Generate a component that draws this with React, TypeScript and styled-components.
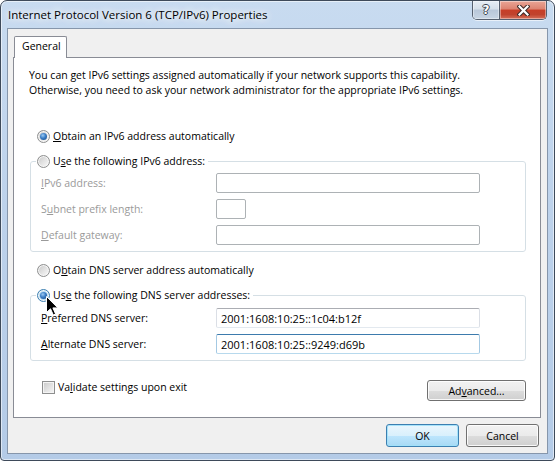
import React from 'react';
import styled, { createGlobalStyle, css } from 'styled-components';

const GlobalStyle = createGlobalStyle`
  html, body {
    margin: 0;
    padding: 0;
    background: #fff;
  }
  body {
    font-family: "Open Sans", "Noto Sans", sans-serif;
    font-size: 10.5px;
    color: #000;
  }
  * {
    box-sizing: border-box;
  }
`;

const Window = styled.div`
  position: relative;
  width: 555px;
  height: 461px;
  display: flex;
  flex-direction: column;
  padding: 0 6px 6px 6px;
  border: 1px solid #3e4a5a;
  border-radius: 7px 7px 4px 4px;
  background: linear-gradient(180deg, #c8dbf0 0%, #bdd2eb 45%, #b4cbe7 100%);
  box-shadow: inset 0 0 0 1px rgba(255, 255, 255, 0.55);
  overflow: hidden;
`;

const TitleBar = styled.div`
  height: 27px;
  flex-shrink: 0;
  display: flex;
  align-items: flex-start;
`;

const Title = styled.div`
  padding: 6px 0 0 1px;
  font-size: 11.5px;
  line-height: 15px;
  text-shadow: 0 0 6px #fff, 0 0 10px #fff, 0 0 14px rgba(255, 255, 255, 0.8);
`;

const Captions = styled.div`
  margin-left: auto;
  margin-right: 1px;
  display: flex;
  height: 19px;
  border: 1px solid #56606f;
  border-top: none;
  border-radius: 0 0 5px 5px;
  overflow: hidden;
  box-shadow: 0 1px 0 rgba(255, 255, 255, 0.6);
`;

const CaptionButton = styled.div<{ $kind: 'help' | 'close' }>`
  display: flex;
  align-items: center;
  justify-content: center;
  width: ${p => (p.$kind === 'help' ? 27 : 46)}px;
  box-shadow: inset 0 0 0 1px rgba(255, 255, 255, 0.4);
  ${p =>
    p.$kind === 'help'
      ? css`
          border-right: 1px solid #56606f;
          background: linear-gradient(180deg, #e6edf5 0%, #d5dfea 45%, #b8c7d9 50%, #c8d5e4 100%);
        `
      : css`
          background: linear-gradient(180deg, #e9a596 0%, #dc8270 45%, #c73e27 50%, #c0432d 75%, #d6705a 100%);
        `}
`;

const HelpGlyph = styled.span`
  font-family: "DejaVu Sans", sans-serif;
  font-weight: bold;
  font-size: 12px;
  line-height: 1;
  color: #fff;
  text-shadow: 1px 0 #3b4450, -1px 0 #3b4450, 0 1px #3b4450, 0 -1px #3b4450;
`;

const Client = styled.div`
  flex: 1;
  display: flex;
  flex-direction: column;
  background: #f0f0f0;
  border: 1px solid #8696ab;
  padding: 7px 6px 6px 5px;
`;

const TabStrip = styled.div`
  display: flex;
  padding-left: 1px;
  position: relative;
  z-index: 1;
`;

const Tab = styled.div`
  width: 53px;
  height: 22px;
  margin-bottom: -1px;
  padding: 2px 0 0 7px;
  line-height: 15px;
  background: #fff;
  border: 1px solid #898c95;
  border-bottom: none;
  border-radius: 2px 2px 0 0;
`;

const Panel = styled.div`
  flex: 1;
  display: flex;
  flex-direction: column;
  background: #fff;
  border: 1px solid #898c95;
  padding: 10px 14px 0 16px;
`;

const Intro = styled.p`
  margin: 0 0 0 -1px;
  line-height: 15px;
`;

const Line = styled.span`
  display: block;
  white-space: nowrap;
`;

const OptionRow = styled.label<{ $top: number }>`
  display: flex;
  align-items: center;
  gap: 3px;
  height: 15px;
  line-height: 15px;
  margin: ${p => p.$top}px 0 0 7px;
  white-space: nowrap;
`;

const RadioMark = styled.span<{ $checked?: boolean; $hot?: boolean }>`
  width: 13px;
  height: 13px;
  flex-shrink: 0;
  display: flex;
  align-items: center;
  justify-content: center;
  border-radius: 50%;
  border: 1px solid ${p => (p.$hot ? '#3c7fb1' : '#8e8f8f')};
  background: ${p =>
    p.$hot
      ? 'radial-gradient(circle at 50% 50%, #cfe8f8 0%, #b3daf4 60%, #e6f3fc 100%)'
      : 'linear-gradient(135deg, #c6c6c6 0%, #e2e2e2 50%, #fbfbfb 100%)'};
  box-shadow: inset 0 0 0 1px #f6f6f6;

  &::after {
    content: '';
    display: ${p => (p.$checked ? 'block' : 'none')};
    width: 7px;
    height: 7px;
    border-radius: 50%;
    background: radial-gradient(circle at 40% 35%, #9ccaf2 0%, #3a7dc6 45%, #17467f 100%);
  }
`;

const CheckMark = styled.span`
  width: 13px;
  height: 13px;
  flex-shrink: 0;
  border: 1px solid #8e8f8f;
  background: linear-gradient(135deg, #c9c9c9 0%, #e3e3e3 55%, #f7f7f7 100%);
  box-shadow: inset 0 0 0 1px #f4f4f4;
`;

const Key = styled.span`
  text-decoration: underline;
  text-underline-offset: 1px;
`;

const Group = styled.fieldset<{ $top: number; $padTop: number }>`
  margin: ${p => p.$top}px 0 0 0;
  min-width: 0;
  padding: ${p => p.$padTop}px 0 6px 0;
  border: 1px solid #d5dfe5;
  border-radius: 3px;
`;

const Legend = styled.legend`
  margin-left: 5px;
  padding: 0 3px 0 1px;
  display: flex;
  align-items: center;
  gap: 3px;
  height: 15px;
  line-height: 15px;
  white-space: nowrap;
`;

const FieldGrid = styled.div`
  display: grid;
  grid-template-columns: 175px auto;
  row-gap: 6px;
  align-items: center;
  padding-left: 10px;
`;

const FieldLabel = styled.span<{ $disabled?: boolean }>`
  color: ${p => (p.$disabled ? '#9a9a9a' : '#000')};
  line-height: 15px;
  white-space: nowrap;
`;

type BoxState = 'disabled' | 'normal' | 'focused';

const TextBox = styled.input<{ $w: number; $state: BoxState }>`
  width: ${p => p.$w}px;
  height: 20px;
  margin: 0;
  padding: 0 4px;
  font: inherit;
  font-size: 11px;
  color: #000;
  background: #fff;
  border-radius: 2px;
  outline: none;
  border: 1px solid;
  ${p =>
    p.$state === 'disabled'
      ? css`
          border-color: #adb2b5;
        `
      : p.$state === 'focused'
        ? css`
            border-color: #3d7bad #a4c9e3 #b7d9ed #a4c9e3;
          `
        : css`
            border-color: #abadb3 #dbdfe6 #e3e9ef #dbdfe6;
          `}
`;

const BottomRow = styled.div`
  display: flex;
  justify-content: space-between;
  align-items: flex-start;
  margin-top: 19px;
`;

const CheckOption = styled.label`
  display: flex;
  align-items: center;
  gap: 3px;
  height: 15px;
  line-height: 15px;
  margin-left: 12px;
`;

const Button = styled.button<{ $w: number; $h?: number; $default?: boolean }>`
  width: ${p => p.$w}px;
  height: ${p => p.$h ?? 23}px;
  margin: 0;
  padding: 0;
  font: inherit;
  color: #000;
  border-radius: 3px;
  border: 1px solid ${p => (p.$default ? '#3c7fb1' : '#707070')};
  background: ${p =>
    p.$default
      ? 'linear-gradient(180deg, #eaf6fd 0%, #d9f0fc 50%, #bee6fd 50%, #a7d9f5 100%)'
      : 'linear-gradient(180deg, #f2f2f2 0%, #ebebeb 50%, #dddddd 50%, #cfcfcf 100%)'};
  box-shadow: inset 0 0 0 1px ${p => (p.$default ? 'rgba(160, 225, 250, 0.9)' : 'rgba(255, 255, 255, 0.85)')};
`;

const Footer = styled.div`
  display: flex;
  justify-content: flex-end;
  gap: 7px;
  margin-top: 6px;
  padding-right: 2px;
`;

const Cursor = styled.svg`
  position: absolute;
  left: 45px;
  top: 295px;
  width: 13px;
  height: 20px;
  pointer-events: none;
`;

const CloseIcon = () => (
  <svg width="13" height="11" viewBox="0 0 13 11">
    <path d="M2.5 1.5 L10.5 9.5 M10.5 1.5 L2.5 9.5" stroke="#3b2a28" strokeWidth="4.2" strokeLinecap="square" />
    <path d="M2.5 1.5 L10.5 9.5 M10.5 1.5 L2.5 9.5" stroke="#fff" strokeWidth="2.2" strokeLinecap="square" />
  </svg>
);

export default function App() {
  return (
    <>
      <GlobalStyle />
      <Window>
        <TitleBar>
          <Title>Internet Protocol Version 6 (TCP/IPv6) Properties</Title>
          <Captions>
            <CaptionButton $kind="help">
              <HelpGlyph>?</HelpGlyph>
            </CaptionButton>
            <CaptionButton $kind="close">
              <CloseIcon />
            </CaptionButton>
          </Captions>
        </TitleBar>

        <Client>
          <TabStrip>
            <Tab>General</Tab>
          </TabStrip>
          <Panel>
            <Intro>
              <Line>You can get IPv6 settings assigned automatically if your network supports this capability.</Line>
              <Line>Otherwise, you need to ask your network administrator for the appropriate IPv6 settings.</Line>
            </Intro>

            <OptionRow $top={31}>
              <RadioMark $checked />
              <span>
                <Key>O</Key>btain an IPv6 address automatically
              </span>
            </OptionRow>

            <Group $top={10} $padTop={4}>
              <Legend>
                <RadioMark />
                <span>
                  U<Key>s</Key>e the following IPv6 address:
                </span>
              </Legend>
              <FieldGrid>
                <FieldLabel $disabled>
                  <Key>I</Key>Pv6 address:
                </FieldLabel>
                <TextBox $w={264} $state="disabled" readOnly disabled />
                <FieldLabel $disabled>
                  S<Key>u</Key>bnet prefix length:
                </FieldLabel>
                <TextBox $w={30} $state="disabled" readOnly disabled />
                <FieldLabel $disabled>
                  <Key>D</Key>efault gateway:
                </FieldLabel>
                <TextBox $w={264} $state="disabled" readOnly disabled />
              </FieldGrid>
            </Group>

            <OptionRow $top={11}>
              <RadioMark />
              <span>
                O<Key>b</Key>tain DNS server address automatically
              </span>
            </OptionRow>

            <Group $top={10} $padTop={5}>
              <Legend>
                <RadioMark $checked $hot />
                <span>
                  Us<Key>e</Key> the following DNS server addresses:
                </span>
              </Legend>
              <FieldGrid>
                <FieldLabel>
                  <Key>P</Key>referred DNS server:
                </FieldLabel>
                <TextBox $w={264} $state="normal" readOnly value="2001:1608:10:25::1c04:b12f" />
                <FieldLabel>
                  <Key>A</Key>lternate DNS server:
                </FieldLabel>
                <TextBox $w={264} $state="focused" readOnly value="2001:1608:10:25::9249:d69b" />
              </FieldGrid>
            </Group>

            <BottomRow>
              <CheckOption>
                <CheckMark />
                <span>
                  Va<Key>l</Key>idate settings upon exit
                </span>
              </CheckOption>
              <Button $w={99} $h={21}>
                Ad<Key>v</Key>anced...
              </Button>
            </BottomRow>
          </Panel>

          <Footer>
            <Button $w={73} $default>
              OK
            </Button>
            <Button $w={73}>Cancel</Button>
          </Footer>
        </Client>

        <Cursor viewBox="0 0 13 20">
          <path
            d="M0.5 0.5 L0.5 16.5 L4.5 12.8 L7.3 19 L9.6 18 L6.9 11.9 L11.8 11.9 Z"
            fill="#000"
            stroke="#fff"
            strokeWidth="1"
            strokeLinejoin="miter"
          />
        </Cursor>
      </Window>
    </>
  );
}
